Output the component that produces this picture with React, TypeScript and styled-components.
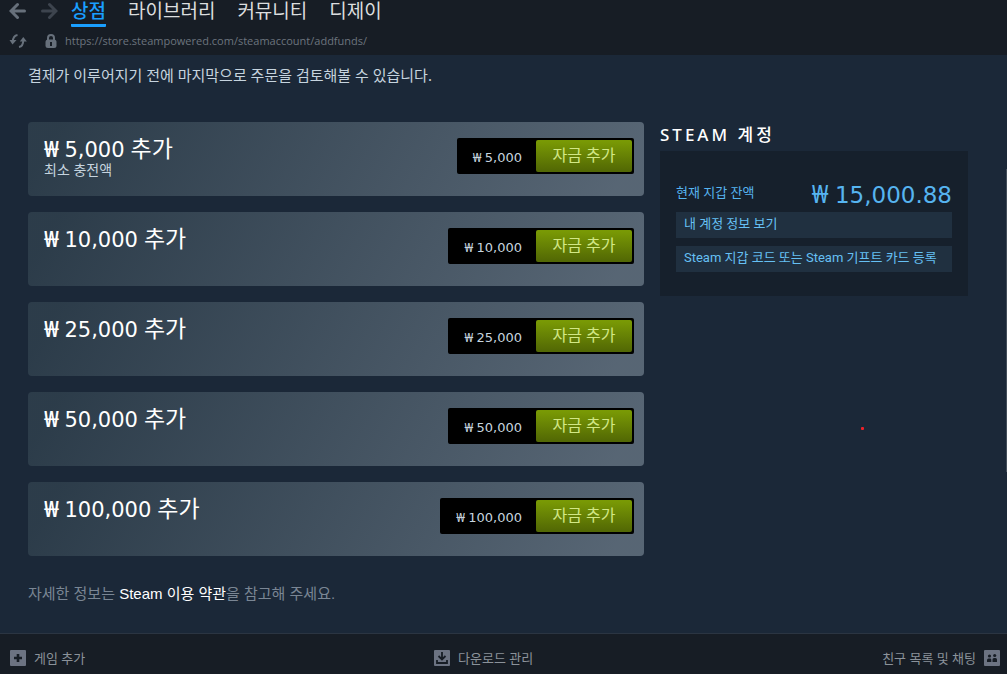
import React from "react";
import styled, { createGlobalStyle } from "styled-components";

const sans = `"Noto Sans", "Noto Sans CJK KR", sans-serif`;
const ui = `"Liberation Sans", "Noto Sans CJK KR", sans-serif`;
const figures = `"DejaVu Sans", "Noto Sans CJK KR", sans-serif`;

const GlobalStyle = createGlobalStyle`
  * { box-sizing: border-box; }
  body { margin: 0; background: #1b2838; color: #c6d4df; font-family: ${sans}; }
  a { color: inherit; text-decoration: none; }
  h1, h2, p, ul { margin: 0; padding: 0; font-weight: 400; }
  button { border: 0; padding: 0; margin: 0; font: inherit; background: none; cursor: pointer; }
`;

const Page = styled.div`
  display: flex;
  flex-direction: column;
  min-height: 100vh;
`;

const TopBar = styled.header`
  background: #171d25;
  height: 55px;
  padding: 0 8px;
`;

const NavRow = styled.nav`
  display: flex;
  align-items: flex-start;
  height: 28px;
`;

const IconButton = styled.button<{ $tone?: string }>`
  display: flex;
  align-items: center;
  justify-content: center;
  width: 20px;
  height: 22px;
  color: ${(p) => p.$tone ?? "#67707b"};
`;

const HistoryButtons = styled.div`
  display: flex;
  gap: 11px;
  margin-right: 12px;
`;

const Tabs = styled.div`
  display: flex;
  gap: 22px;
`;

const Tab = styled.a<{ $active?: boolean }>`
  font-size: 19px;
  line-height: 22px;
  height: 27px;
  white-space: nowrap;
  color: ${(p) => (p.$active ? "#1a9fff" : "#dcdedf")};
  font-weight: ${(p) => (p.$active ? 500 : 400)};
  border-bottom: 3px solid ${(p) => (p.$active ? "#1a9fff" : "transparent")};
  border-radius: 1px;
`;

const AddressRow = styled.div`
  display: flex;
  align-items: center;
  height: 26px;
`;

const LockSlot = styled.span`
  display: flex;
  margin: 0 8px 0 17px;
  color: #67707b;
`;

const Address = styled.span`
  font-family: "Open Sans", sans-serif;
  font-size: 11px;
  line-height: 16px;
  color: #6c747e;
`;

const Main = styled.main`
  position: relative;
  flex: 1;
  padding: 9px 11px 27px 0;
`;

const ScrollThumb = styled.div`
  position: absolute;
  right: 0;
  top: 114px;
  width: 1px;
  height: 303px;
  background: #434e5a;
`;

const Marker = styled.div`
  position: absolute;
  left: 861px;
  top: 372px;
  width: 3px;
  height: 3px;
  border-radius: 1px;
  background: #f02028;
`;

const Content = styled.div`
  width: 100%;
  max-width: 940px;
  margin: 0 auto;
`;

const Intro = styled.p`
  font-size: 15px;
  line-height: 22px;
  margin-bottom: 36px;
`;

const Columns = styled.div`
  display: grid;
  grid-template-columns: minmax(0, 1fr) 308px;
  gap: 16px;
  align-items: start;
`;

const AmountList = styled.ul`
  display: flex;
  flex-direction: column;
  gap: 16px;
  list-style: none;
`;

const AmountCard = styled.li`
  display: flex;
  justify-content: space-between;
  align-items: flex-start;
  min-height: 74px;
  padding: 16px 10px 16px 16px;
  border-radius: 4px;
  background: linear-gradient(-60deg, rgba(226, 244, 255, 0.3) 5%, rgba(84, 107, 115, 0.3) 95%);
`;

const AmountTitle = styled.h2`
  font-family: ${figures};
  font-size: 21px;
  line-height: 20px;
  height: 24px;
  color: #ffffff;
`;

const Hangul = styled.span`
  font-family: ${sans};
  font-size: 23px;
`;

const Currency = styled.span<{ $strong?: boolean }>`
  font-family: ${sans};
  font-weight: ${(p) => (p.$strong ? 600 : 400)};
`;

const AmountNote = styled.p`
  font-size: 14px;
  line-height: 16px;
`;

const Purchase = styled.div`
  display: flex;
  align-items: center;
  height: 36px;
  padding: 2px;
  border-radius: 2px;
  background: #000000;
`;

const Price = styled.span`
  font-family: ${figures};
  font-size: 13px;
  line-height: 32px;
  padding: 2px 14px 0 14px;
`;

const AddButton = styled.button`
  height: 32px;
  width: 96px;
  border-radius: 2px;
  padding-bottom: 2px;
  font-size: 16px;
  line-height: 30px;
  color: #d2e885;
  background: linear-gradient(to bottom, #799905 5%, #536904 95%);
`;

const AccountTitle = styled.h2`
  font-size: 17px;
  line-height: 26px;
  height: 29px;
  letter-spacing: 3px;
  font-weight: 500;
  color: #ffffff;
`;

const AccountBox = styled.div`
  display: flex;
  flex-direction: column;
  gap: 8px;
  padding: 24px 16px;
  background: #16202c;
`;

const Balance = styled.div`
  display: flex;
  align-items: center;
  justify-content: space-between;
  height: 37px;
  margin-bottom: -8px;
  color: #56b4f0;

  ${Currency} { font-size: 25px; }
`;

const BalanceLabel = styled.span`
  font-size: 13px;
  line-height: 16px;
  padding-bottom: 4px;
`;

const BalanceValue = styled.span`
  font-family: ${figures};
  font-size: 23px;
  line-height: 36px;
`;

const AccountLink = styled.a`
  height: 26px;
  padding: 0 8px;
  font-family: Roboto, "Noto Sans CJK KR", sans-serif;
  font-size: 13px;
  line-height: 24px;
  white-space: nowrap;
  color: #66c0f4;
  background: #203040;
`;

const Terms = styled.p`
  margin-top: 26px;
  font-family: ${ui};
  font-size: 15px;
  line-height: 24px;
  color: #7a8694;

  a { color: #ffffff; }
`;

const BottomBar = styled.footer`
  display: flex;
  justify-content: space-between;
  align-items: center;
  height: 41px;
  padding: 8px 7px 0 10px;
  border-top: 1px solid #2b3542;
  background: #171d25;
`;

const BarButton = styled.button`
  display: flex;
  align-items: center;
  gap: 8px;
  font-size: 13px;
  line-height: 16px;
  color: #8b929a;
`;

const Arrow = ({ flip }: { flip?: boolean }) => (
  <svg width="18" height="18" viewBox="0 0 18 18" fill="none" stroke="currentColor" strokeWidth="3" transform={flip ? "scale(-1 1)" : undefined}>
    <path d="M2.5 9H15.500M8.500 2.500L2 9l6.500 6.500" strokeLinecap="round" />
  </svg>
);

const Reload = () => (
  <svg width="18" height="16" viewBox="0 0 18 16" fill="none" stroke="currentColor" strokeWidth="2">
    <path d="M8.500 2C5.500 2.500 4 5 3.800 8.500" />
    <path d="M0.500 7h7L3.500 11.500z" fill="currentColor" stroke="none" />
    <path d="M10 14c3-0.500 4.300-3 4.300-7" />
    <path d="M10.800 8.500h7L14.300 4z" fill="currentColor" stroke="none" />
  </svg>
);

const Lock = () => (
  <svg width="12" height="14" viewBox="0 0 12 14">
    <path d="M3 7V4a3 3 0 0 1 6 0v3" fill="none" stroke="currentColor" strokeWidth="2" />
    <rect x="0.500" y="5.500" width="11" height="8.500" rx="2.500" fill="currentColor" />
    <path d="M6 8v4" stroke="#171d25" strokeWidth="2" />
  </svg>
);

const PlusIcon = () => (
  <svg width="16" height="16" viewBox="0 0 16 16">
    <rect width="16" height="16" rx="1" fill="#6c7382" />
    <path d="M8 4v8M4 8h8" stroke="#171d25" strokeWidth="2.600" />
  </svg>
);

const DownloadIcon = () => (
  <svg width="16" height="16" viewBox="0 0 16 16">
    <rect width="16" height="16" rx="1" fill="#6c7382" />
    <path d="M8 2v7M4.500 6L8 9.500 11.500 6M3 10v3h10v-3" fill="none" stroke="#171d25" strokeWidth="1.800" />
  </svg>
);

const FriendsIcon = () => (
  <svg width="16" height="16" viewBox="0 0 16 16">
    <rect width="16" height="16" rx="1" fill="#6c7382" />
    <g fill="#171d25">
      <circle cx="5.500" cy="6" r="1.600" />
      <circle cx="10.700" cy="5.500" r="1.600" />
      <path d="M3 12V10.300Q3 8.500 4.500 8.500H6q1.300 0 1.300 1.300V12zM8.500 12V9.500Q8.500 8 10 8h1.500Q13 8 13 9.500V12z" />
    </g>
  </svg>
);

const amounts = [
  { value: "5,000", note: "최소 충전액" },
  { value: "10,000" },
  { value: "25,000" },
  { value: "50,000" },
  { value: "100,000" },
];

export default function App() {
  return (
    <Page>
      <GlobalStyle />
      <TopBar>
        <NavRow>
          <HistoryButtons>
            <IconButton aria-label="뒤로"><Arrow /></IconButton>
            <IconButton aria-label="앞으로" $tone="#3d444e"><Arrow flip /></IconButton>
          </HistoryButtons>
          <Tabs>
            <Tab href="#store" $active>상점</Tab>
            <Tab href="#library">라이브러리</Tab>
            <Tab href="#community">커뮤니티</Tab>
            <Tab href="#profile">디제이</Tab>
          </Tabs>
        </NavRow>
        <AddressRow>
          <IconButton aria-label="새로 고침"><Reload /></IconButton>
          <LockSlot><Lock /></LockSlot>
          <Address>https://store.steampowered.com/steamaccount/addfunds/</Address>
        </AddressRow>
      </TopBar>

      <Main>
        <Content>
          <Intro>결제가 이루어지기 전에 마지막으로 주문을 검토해볼 수 있습니다.</Intro>
          <Columns>
            <AmountList>
              {amounts.map(({ value, note }) => (
                <AmountCard key={value}>
                  <div>
                    <AmountTitle>
                      <Currency $strong>₩ </Currency>{value}<Hangul> 추가</Hangul>
                    </AmountTitle>
                    {note && <AmountNote>{note}</AmountNote>}
                  </div>
                  <Purchase>
                    <Price><Currency>₩ </Currency>{value}</Price>
                    <AddButton>자금 추가</AddButton>
                  </Purchase>
                </AmountCard>
              ))}
            </AmountList>
            <aside>
              <AccountTitle>STEAM 계정</AccountTitle>
              <AccountBox>
                <Balance>
                  <BalanceLabel>현재 지갑 잔액</BalanceLabel>
                  <BalanceValue><Currency>₩ </Currency>15,000.88</BalanceValue>
                </Balance>
                <AccountLink href="#account">내 계정 정보 보기</AccountLink>
                <AccountLink href="#redeem">Steam 지갑 코드 또는 Steam 기프트 카드 등록</AccountLink>
              </AccountBox>
            </aside>
          </Columns>
          <Terms>자세한 정보는 <a href="#terms">Steam 이용 약관</a>을 참고해 주세요.</Terms>
        </Content>
        <ScrollThumb />
        <Marker />
      </Main>

      <BottomBar>
        <BarButton><PlusIcon />게임 추가</BarButton>
        <BarButton><DownloadIcon />다운로드 관리</BarButton>
        <BarButton>친구 목록 및 채팅<FriendsIcon /></BarButton>
      </BottomBar>
    </Page>
  );
}
